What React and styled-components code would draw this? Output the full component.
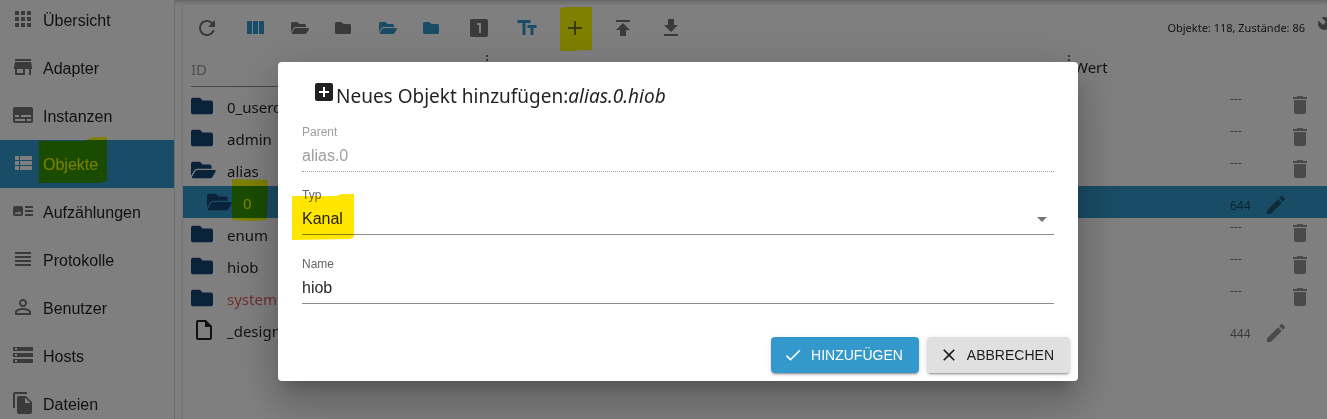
import React from "react";
import styled, { createGlobalStyle, css } from "styled-components";

const UI_FONT = '"Noto Sans", "Open Sans", sans-serif';
const BODY_FONT = '"Liberation Sans", Arial, sans-serif';

const GlobalStyle = createGlobalStyle`
  *, *::before, *::after { box-sizing: border-box; }
  body {
    margin: 0;
    overflow: hidden;
    background: #fff;
    color: rgba(0, 0, 0, 0.87);
    font: 16px/24px ${BODY_FONT};
  }
  button, input, select { font: inherit; color: inherit; }
`;

const PATHS = {
  apps: "M4 8h4V4H4v4zm6 12h4v-4h-4v4zm-6 0h4v-4H4v4zm0-6h4v-4H4v4zm6 0h4v-4h-4v4zm6-10v4h4V4h-4zm-6 4h4V4h-4v4zm6 6h4v-4h-4v4zm0 6h4v-4h-4v4z",
  store: "M20 4H4v2h16V4zm1 10v-2l-1-5H4l-1 5v2h1v6h10v-6h4v6h2v-6h1zm-9 4H6v-4h6v4z",
  subtitles: "M20 4H4c-1.1 0-2 .9-2 2v12c0 1.1.9 2 2 2h16c1.1 0 2-.9 2-2V6c0-1.1-.9-2-2-2zM4 12h4v2H4v-2zm10 6H4v-2h10v2zm6 0h-4v-2h4v2zm0-4H10v-2h10v2z",
  viewList: "M4 14h4v-4H4v4zm0 5h4v-4H4v4zM4 9h4V5H4v4zm5 5h12v-4H9v4zm0 5h12v-4H9v4zM9 5v4h12V5H9z",
  artTrack: "M22 13h-8v-2h8v2zm0-6h-8v2h8V7zm-8 10h8v-2h-8v2zm-2-8v6c0 1.1-.9 2-2 2H4c-1.1 0-2-.9-2-2V9c0-1.1.9-2 2-2h6c1.1 0 2 .9 2 2zm-1.5 6l-2.25-3-1.75 2.26-1.25-1.51L3.5 15h7z",
  headline: "M4 15h16v-2H4v2zm0 4h16v-2H4v2zm0-8h16V9H4v2zm0-6v2h16V5H4z",
  person: "M12 5.9c1.16 0 2.1.94 2.1 2.1s-.94 2.1-2.1 2.1S9.900 9.160 9.900 8s.94-2.1 2.1-2.1m0 9c2.97 0 6.1 1.46 6.1 2.100v1.100H5.900V17c0-.64 3.130-2.100 6.100-2.100M12 4C9.790 4 8 5.790 8 8s1.790 4 4 4 4-1.790 4-4-1.790-4-4-4zm0 9c-2.670 0-8 1.340-8 4v3h16v-3c0-2.660-5.330-4-8-4z",
  storage: "M2 20h20v-4H2v4zm2-3h2v2H4v-2zM2 4v4h20V4H2zm4 3H4V5h2v2zm-4 7h20v-4H2v4zm2-3h2v2H4v-2z",
  fileCopy: "M16 1H4c-1.1 0-2 .9-2 2v14h2V3h12V1zm-1 4l6 6v10c0 1.1-.9 2-2 2H7.990C6.890 23 6 22.100 6 21l.01-14c0-1.1.89-2 1.990-2h7zm-1 7h5.500L14 6.500V12z",
  refresh: "M17.65 6.35C16.200 4.900 14.210 4 12 4c-4.420 0-7.990 3.580-7.990 8s3.570 8 7.990 8c3.730 0 6.840-2.550 7.730-6h-2.080c-.82 2.330-3.040 4-5.650 4-3.310 0-6-2.690-6-6s2.690-6 6-6c1.660 0 3.140.69 4.220 1.780L13 11h7V4l-2.350 2.350z",
  columns: "M10 18h5V5h-5v13zm-6 0h5V5H4v13zM16 5v13h5V5h-5z",
  one: "M19 3H5c-1.1 0-2 .9-2 2v14c0 1.1.9 2 2 2h14c1.1 0 2-.9 2-2V5c0-1.1-.9-2-2-2zm-5 14h-2V9h-2V7h4v10z",
  text: "M2.500 4v3h5v12h3V7h5V4h-13zm19 5h-9v3h3v7h3v-7h3V9z",
  add: "M19 13h-6v6h-2v-6H5v-2h6V5h2v6h6v2z",
  upload: "M5 4v2h14V4H5zm0 10h4v6h6v-6h4l-7-7-7 7z",
  download: "M19 9h-4V3H9v6H5l7 7 7-7zM5 18v2h14v-2H5z",
  wrench: "M22.700 19l-9.100-9.100c.9-2.300.4-5-1.500-6.900-2-2-5-2.400-7.400-1.300L9 6 6 9 1.600 4.700C.4 7.100.9 10.100 2.900 12.100c1.900 1.900 4.600 2.400 6.900 1.500l9.100 9.100c.4.4 1 .4 1.400 0l2.300-2.300c.5-.4.5-1.100.1-1.400z",
  trash: "M6 19c0 1.100.9 2 2 2h8c1.100 0 2-.9 2-2V7H6v12zM19 4h-3.500l-1-1h-5l-1 1H5v2h14V4z",
  edit: "M3 17.250V21h3.750L17.810 9.940l-3.750-3.750L3 17.250zM20.710 7.040c.39-.39.39-1.020 0-1.410l-2.340-2.340c-.39-.39-1.020-.39-1.410 0l-1.830 1.830 3.750 3.750 1.830-1.830z",
  file: "M14 2H6c-1.100 0-1.990.9-1.990 2L4 20c0 1.100.89 2 1.990 2H18c1.100 0 2-.9 2-2V8l-6-6zM6 20V4h7v5h5v11H6z",
  addBox: "M19 3H5c-1.110 0-2 .9-2 2v14c0 1.100.89 2 2 2h14c1.100 0 2-.9 2-2V5c0-1.100-.9-2-2-2zm-2 10h-4v4h-2v-4H7v-2h4V7h2v4h4v2z",
  check: "M9 16.170L4.830 12l-1.420 1.410L9 19 21 7l-1.410-1.410z",
  close: "M19 6.410L17.590 5 12 10.590 6.410 5 5 6.410 10.590 12 5 17.590 6.410 19 12 13.410 17.590 19 19 17.590 13.410 12z",
  arrow: "M7 10l5 5 5-5z",
};

const FOLDER =
  "M464 128H272l-64-64H48C21.490 64 0 85.490 0 112v288c0 26.510 21.490 48 48 48h416c26.510 0 48-21.490 48-48V176c0-26.510-21.490-48-48-48z";
const FOLDER_OPEN =
  "M572.694 292.093L500.270 416.248A63.997 63.997 0 0 1 444.989 448H45.025c-18.523 0-30.064-20.093-20.731-36.093l72.424-124.155A64 64 0 0 1 152 256h399.964c18.523 0 30.064 20.093 20.730 36.093zM152 224h328v-48c0-26.510-21.490-48-48-48H272l-64-64H48C21.490 64 0 85.490 0 112v278.046l69.077-118.418C86.214 242.250 117.989 224 152 224z";

const Svg = styled.svg`
  display: block;
  flex: none;
  fill: currentColor;
`;

const Icon = ({ name, size = 24 }) => (
  <Svg viewBox="0 0 24 24" width={size} height={size} aria-hidden="true">
    <path d={PATHS[name]} />
  </Svg>
);

const FolderIcon = ({ open, size = 16 }) => (
  <Svg viewBox={open ? "0 0 576 512" : "0 0 512 512"} height={size} aria-hidden="true">
    <path d={open ? FOLDER_OPEN : FOLDER} />
  </Svg>
);

/* Yellow text-marker stroke laid over the marked control */
const marker = css`
  position: relative;
  &::after {
    content: "";
    position: absolute;
    background: #ff0;
    mix-blend-mode: multiply;
    pointer-events: none;
  }
`;

const Page = styled.div`
  display: flex;
  height: 100vh;
  overflow: hidden;
`;

const Sidebar = styled.nav`
  flex: none;
  width: 175px;
  border-right: 1px solid #dcdcdc;
`;

const NavList = styled.ul`
  list-style: none;
  margin: -4px 0 0;
  padding: 0;
`;

const NavLink = styled.a`
  display: flex;
  align-items: center;
  gap: 8px;
  height: 48px;
  padding: 2px 0 0 11px;
  color: rgba(0, 0, 0, 0.87);
  text-decoration: none;
  svg { color: #757575; margin-bottom: 4px; }
  ${(p) => p.$active && css`
    background: #3399cc;
    color: #fff;
    svg { color: #fff; }
  `}
`;

const NavLabel = styled.span`
  ${(p) => p.$marked && css`
    ${marker}
    &::after {
      inset: -16px -9px -6px -4px;
      clip-path: polygon(0 4px, 46px 4px, 54px 0, 100% 0, 100% 44px, 60px 100%, 0 100%);
    }
  `}
`;

const Main = styled.main`
  flex: 1;
  min-width: 0;
  padding: 4px 0 0 8px;
  overflow: hidden;
  box-shadow: inset 0 6px 6px -6px rgba(0, 0, 0, 0.4);
`;

const Card = styled.section`
  height: 100%;
  border-radius: 4px 0 0 0;
  box-shadow: 0 1px 3px rgba(0, 0, 0, 0.25);
  font-family: ${UI_FONT};
`;

const Toolbar = styled.div`
  display: flex;
  align-items: center;
  height: 48px;
  margin-right: -26px;
`;

const ToolButton = styled.button`
  display: flex;
  flex: none;
  align-items: center;
  width: ${(p) => (p.$small ? 44 : 48)}px;
  height: 48px;
  padding: 0 0 0 12px;
  border: 0;
  background: none;
  color: ${(p) => (p.$accent ? "#3399cc" : "#757575")};
  ${(p) => p.$marked && css`
    ${marker}
    &::after {
      inset: 3px 7px 1px 9px;
      clip-path: polygon(0 1px, 8px 0, 100% 0, 100% 43px, 18px 43px, 17px 100%, 0 100%);
    }
  `}
`;

const Stats = styled.span`
  margin-left: auto;
  font-size: 11px;
  line-height: 16px;
`;

const ObjectTable = styled.table`
  width: 100%;
  table-layout: fixed;
  border-collapse: collapse;
  th, td { padding: 0; text-align: left; font-weight: 400; }
`;

const Col = styled.col`
  width: ${(p) => p.$w};
`;

const HeadCell = styled.th`
  height: 38px;
  vertical-align: top;
  font-size: 15px;
`;

const Handle = styled.div`
  height: 30px;
  padding-left: 4px;
  margin-top: 3px;
  border-left: 2px dotted #757575;
`;

const FilterInput = styled.input`
  display: block;
  width: calc(100% - 16px);
  height: 35px;
  margin-left: 8px;
  padding: 0;
  border: 0;
  border-bottom: 1px solid #8c8c8c;
  background: none;
  &::placeholder { color: #9e9e9e; opacity: 1; }
`;

const Row = styled.tr`
  height: 32px;
  background: ${(p) => (p.$selected ? "#3399cc" : "none")};
`;

const NameCell = styled.div`
  display: flex;
  align-items: center;
  height: 32px;
  padding-left: ${(p) => (p.$level ? 24 : 8)}px;
  font-size: 15px;
  line-height: 24px;
  color: ${(p) => p.$color || "rgba(0,0,0,.87)"};
`;

const NodeIcon = styled.span`
  flex: none;
  width: 36px;
  padding-left: ${(p) => (p.$file ? 1 : 0)}px;
  color: ${(p) => (p.$file ? "#222" : "#164477")};
`;

const NodeName = styled.span`
  margin-top: 2px;
  ${(p) => p.$marked && css`
    ${marker}
    &::after {
      inset: -12px -16px -6px -11px;
      clip-path: polygon(0 0, 100% 1px, 35px 41px, 20px 100%, 0 41px);
    }
  `}
`;

const Acl = styled.div`
  height: 32px;
  padding: ${(p) => (p.$low ? 12 : 1)}px 0 0 1px;
  font-size: 12px;
  line-height: 16px;
  color: rgba(0, 0, 0, 0.54);
`;

const Actions = styled.div`
  display: flex;
  height: 32px;
  padding: ${(p) => (p.$edit ? 7 : 3)}px 15px 0 1px;
  justify-content: ${(p) => (p.$edit ? "flex-start" : "flex-end")};
`;

const RowButton = styled.button`
  flex: none;
  width: 24px;
  height: 24px;
  padding: 0;
  border: 0;
  background: none;
  color: rgba(0, 0, 0, 0.42);
`;

const Backdrop = styled.div`
  position: fixed;
  inset: 0;
  display: flex;
  align-items: flex-start;
  justify-content: center;
  padding: 62px 0 0 29px;
  background: rgba(0, 0, 0, 0.5);
`;

const Dialog = styled.form`
  width: 100%;
  max-width: 800px;
  border-radius: 4px;
  background: #fff;
  box-shadow: 0 11px 15px -7px rgba(0, 0, 0, 0.2), 0 24px 38px 3px rgba(0, 0, 0, 0.14),
    0 9px 46px 8px rgba(0, 0, 0, 0.12);
`;

const DialogTitle = styled.h2`
  display: flex;
  align-items: flex-start;
  margin: 0;
  padding: 18px 24px 10px 34px;
  font: 400 19px/32px ${UI_FONT};
  span { padding-bottom: 2px; }
`;

const Fields = styled.div`
  display: flex;
  flex-direction: column;
  padding: 0 24px;
`;

const Field = styled.div`
  position: relative;
  display: flex;
  flex-direction: column;
  margin-bottom: ${(p) => p.$gap || 0}px;
  color: ${(p) => (p.$disabled ? "#9e9e9e" : "rgba(0,0,0,.87)")};
  label {
    font-size: 12px;
    line-height: 16px;
    color: ${(p) => (p.$disabled ? "#9e9e9e" : "#666")};
  }
  > svg {
    position: absolute;
    right: 0;
    bottom: 4px;
    color: #757575;
    pointer-events: none;
  }
  ${(p) => p.$marked && css`
    ${marker}
    &::after {
      left: -10px;
      top: 7px;
      width: 62px;
      height: 46px;
      background: #ffe600;
      clip-path: polygon(0 2px, 44px 2px, 50px 0, 100% 0, 100% 43px, 58px 45px, 0 100%);
    }
  `}
`;

const control = css`
  width: 100%;
  height: 32px;
  padding: 0;
  border: 0;
  border-bottom: 1px ${(p) => (p.disabled ? "dotted #9e9e9e" : "solid #8c8c8c")};
  border-radius: 0;
  background: none;
  outline: 0;
  color: inherit;
  appearance: none;
`;
const TextInput = styled.input`${control}`;
const Select = styled.select`${control}`;

const DialogActions = styled.div`
  display: flex;
  justify-content: flex-end;
  gap: 8px;
  padding: 33px 8px 8px;
`;

const ActionButton = styled.button`
  display: flex;
  align-items: center;
  gap: 8px;
  height: 36px;
  padding: 0 16px 0 12px;
  border: 0;
  border-radius: 4px;
  font-size: 14px;
  text-transform: uppercase;
  background: ${(p) => (p.$primary ? "#3399cc" : "#e0e0e0")};
  color: ${(p) => (p.$primary ? "#fff" : "rgba(0,0,0,.87)")};
  box-shadow: 0 3px 1px -2px rgba(0, 0, 0, 0.2), 0 2px 2px 0 rgba(0, 0, 0, 0.14),
    0 1px 5px 0 rgba(0, 0, 0, 0.12);
`;

const NAV = [
  ["apps", "Übersicht"],
  ["store", "Adapter"],
  ["subtitles", "Instanzen"],
  ["viewList", "Objekte"],
  ["artTrack", "Aufzählungen"],
  ["headline", "Protokolle"],
  ["person", "Benutzer"],
  ["storage", "Hosts"],
  ["fileCopy", "Dateien"],
];

const TOOLS = [
  { icon: "refresh", label: "Aktualisieren" },
  { icon: "columns", label: "Spalten", accent: true },
  { folder: "open", label: "Alle öffnen" },
  { folder: "closed", label: "Alle schließen" },
  { folder: "open", label: "Ebene öffnen", accent: true },
  { folder: "closed", label: "Ebene schließen", accent: true },
  { icon: "one", label: "Zustände" },
  { icon: "text", label: "Beschreibungen", accent: true },
  { icon: "add", label: "Objekt hinzufügen", marked: true },
  { icon: "upload", label: "Hochladen" },
  { icon: "download", label: "Herunterladen" },
];

const ROWS = [
  { name: "0_userdata" },
  { name: "admin" },
  { name: "alias", open: true },
  { name: "0", open: true, level: 1, selected: true, acl: "644", color: "#fff" },
  { name: "enum" },
  { name: "hiob" },
  { name: "system", color: "#e06060" },
  { name: "_design", file: true, acl: "444" },
];

export default function App() {
  return (
    <>
      <GlobalStyle />
      <Page>
        <Sidebar>
          <NavList>
            {NAV.map(([icon, label]) => (
              <li key={label}>
                <NavLink href="#" $active={label === "Objekte"}>
                  <Icon name={icon} />
                  <NavLabel $marked={label === "Objekte"}>{label}</NavLabel>
                </NavLink>
              </li>
            ))}
          </NavList>
        </Sidebar>
        <Main>
          <Card>
            <Toolbar>
              {TOOLS.map((t) => (
                <ToolButton
                  key={t.label}
                  type="button"
                  aria-label={t.label}
                  $small={!!t.folder}
                  $accent={t.accent}
                  $marked={t.marked}
                >
                  {t.folder ? <FolderIcon open={t.folder === "open"} /> : <Icon name={t.icon} />}
                </ToolButton>
              ))}
              <Stats>Objekte: 118, Zustände: 86</Stats>
              <ToolButton type="button" aria-label="Einstellungen">
                <Icon name="wrench" />
              </ToolButton>
            </Toolbar>
            <ObjectTable>
              <colgroup>
                <Col $w="303px" />
                <Col $w="auto" />
                <Col $w="161px" />
                <Col $w="34px" />
                <Col $w="64px" />
              </colgroup>
              <thead>
                <tr>
                  <HeadCell><FilterInput placeholder="ID" aria-label="ID" /></HeadCell>
                  <HeadCell><Handle /></HeadCell>
                  <HeadCell><Handle>Wert</Handle></HeadCell>
                  <HeadCell />
                  <HeadCell />
                </tr>
              </thead>
              <tbody>
                {ROWS.map((r) => (
                  <Row key={r.name} $selected={r.selected}>
                    <td>
                      <NameCell $level={r.level} $color={r.color}>
                        <NodeIcon $file={r.file}>
                          {r.file ? <Icon name="file" /> : <FolderIcon open={r.open} size={22} />}
                        </NodeIcon>
                        <NodeName $marked={r.selected}>{r.name}</NodeName>
                      </NameCell>
                    </td>
                    <td />
                    <td />
                    <td>
                      <Acl $low={!!r.acl}>{r.acl || "---"}</Acl>
                    </td>
                    <td>
                      <Actions $edit={!!r.acl}>
                        <RowButton type="button" aria-label={r.acl ? "Bearbeiten" : "Löschen"}>
                          <Icon name={r.acl ? "edit" : "trash"} />
                        </RowButton>
                      </Actions>
                    </td>
                  </Row>
                ))}
              </tbody>
            </ObjectTable>
          </Card>
        </Main>
      </Page>
      <Backdrop>
        <Dialog role="dialog" aria-labelledby="dialog-title">
          <DialogTitle id="dialog-title">
            <Icon name="addBox" />
            <span>Neues Objekt hinzufügen:<i>alias.0.hiob</i></span>
          </DialogTitle>
          <Fields>
            <Field $disabled $gap={15}>
              <label htmlFor="parent">Parent</label>
              <TextInput id="parent" disabled defaultValue="alias.0" />
            </Field>
            <Field $marked $gap={21}>
              <label htmlFor="type">Typ</label>
              <Select id="type" defaultValue="Kanal">
                <option>Kanal</option>
              </Select>
              <Icon name="arrow" />
            </Field>
            <Field>
              <label htmlFor="name">Name</label>
              <TextInput id="name" defaultValue="hiob" />
            </Field>
          </Fields>
          <DialogActions>
            <ActionButton type="button" $primary>
              <Icon name="check" size={20} />
              Hinzufügen
            </ActionButton>
            <ActionButton type="button">
              <Icon name="close" size={20} />
              Abbrechen
            </ActionButton>
          </DialogActions>
        </Dialog>
      </Backdrop>
    </>
  );
}
